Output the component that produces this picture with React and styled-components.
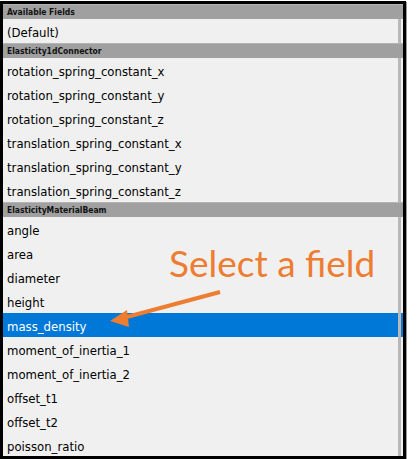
import React from 'react';
import styled, { createGlobalStyle } from 'styled-components';

const GlobalStyle = createGlobalStyle`
  html, body {
    margin: 0;
    padding: 0;
    background: #ffffff;
  }
`;

const groups = [
    { title: 'Available Fields', fields: ['(Default)'] },
    {
        title: 'Elasticity1dConnector',
        fields: [
            'rotation_spring_constant_x',
            'rotation_spring_constant_y',
            'rotation_spring_constant_z',
            'translation_spring_constant_x',
            'translation_spring_constant_y',
            'translation_spring_constant_z',
        ],
    },
    {
        title: 'ElasticityMaterialBeam',
        fields: [
            'angle',
            'area',
            'diameter',
            'height',
            'mass_density',
            'moment_of_inertia_1',
            'moment_of_inertia_2',
            'offset_t1',
            'offset_t2',
            'poisson_ratio',
        ],
    },
];

const SELECTED = 'mass_density';

const App = () => {
    return (
        <Page>
            <GlobalStyle />
            <Frame>
                <List>
                    {groups.map(group => (
                        <React.Fragment key={group.title}>
                            <GroupHeader>{group.title}</GroupHeader>
                            {group.fields.map(field => (
                                <FieldRow key={field} selected={field === SELECTED}>
                                    <span className='field-name'>{field}</span>
                                    <span className='field-gutter' />
                                </FieldRow>
                            ))}
                        </React.Fragment>
                    ))}
                </List>
                <Callout>
                    <span className='callout-text'>Select a field</span>
                    <svg className='callout-arrow' width='130' height='50' viewBox='0 0 130 50'>
                        <line x1='117' y1='8' x2='20' y2='34' stroke='#ED7D31' strokeWidth='4' />
                        <polygon points='7,37 24,26 26,43' fill='#ED7D31' />
                    </svg>
                </Callout>
            </Frame>
        </Page>
    );
};

const Page = styled.div`
  width: 417px;
  height: 459px;
  padding: 1px 0 0 0;
  box-sizing: border-box;
`;

const Frame = styled.div`
  position: relative;
  width: 406px;
  height: 458px;
  box-sizing: border-box;
  border: 3px solid #000;
  background: #f0f0f0;
  overflow: hidden;
  box-shadow: 1px 1px 0 #9a9a9a;
`;

const List = styled.div`
  display: flex;
  flex-direction: column;
`;

const GroupHeader = styled.div`
  height: 14px;
  background: #a0a0a0;
  border-top: 1px solid #b4b4b4;
  padding-left: 4px;
  display: flex;
  align-items: center;
  font-family: "DejaVu Sans Condensed", "DejaVu Sans", sans-serif;
  font-weight: bold;
  font-size: 8.5px;
  color: #111111;
`;

const FieldRow = styled.div`
  height: 24px;
  display: flex;
  align-items: center;
  background: ${props => (props.selected ? '#0078d7' : '#f0f0f0')};
  color: ${props => (props.selected ? '#ffffff' : '#000000')};
  font-family: "DejaVu Sans Condensed", "DejaVu Sans", sans-serif;
  font-size: 13px;

  & .field-name {
    flex: 1;
    padding-left: 4px;
    padding-top: 2px;
  }

  & .field-gutter {
    align-self: stretch;
    width: 3px;
    margin-right: 2px;
    background: #b8b8b8;
  }
`;

const Callout = styled.div`
  position: absolute;
  left: 100px;
  top: 236px;
  width: 290px;
  height: 95px;

  & .callout-text {
    position: absolute;
    left: 66px;
    top: 0;
    font-family: Lato, "Open Sans", sans-serif;
    font-size: 37px;
    color: #ED7D31;
    white-space: nowrap;
  }

  & .callout-arrow {
    position: absolute;
    left: 0;
    top: 44px;
  }
`;

export default App;
